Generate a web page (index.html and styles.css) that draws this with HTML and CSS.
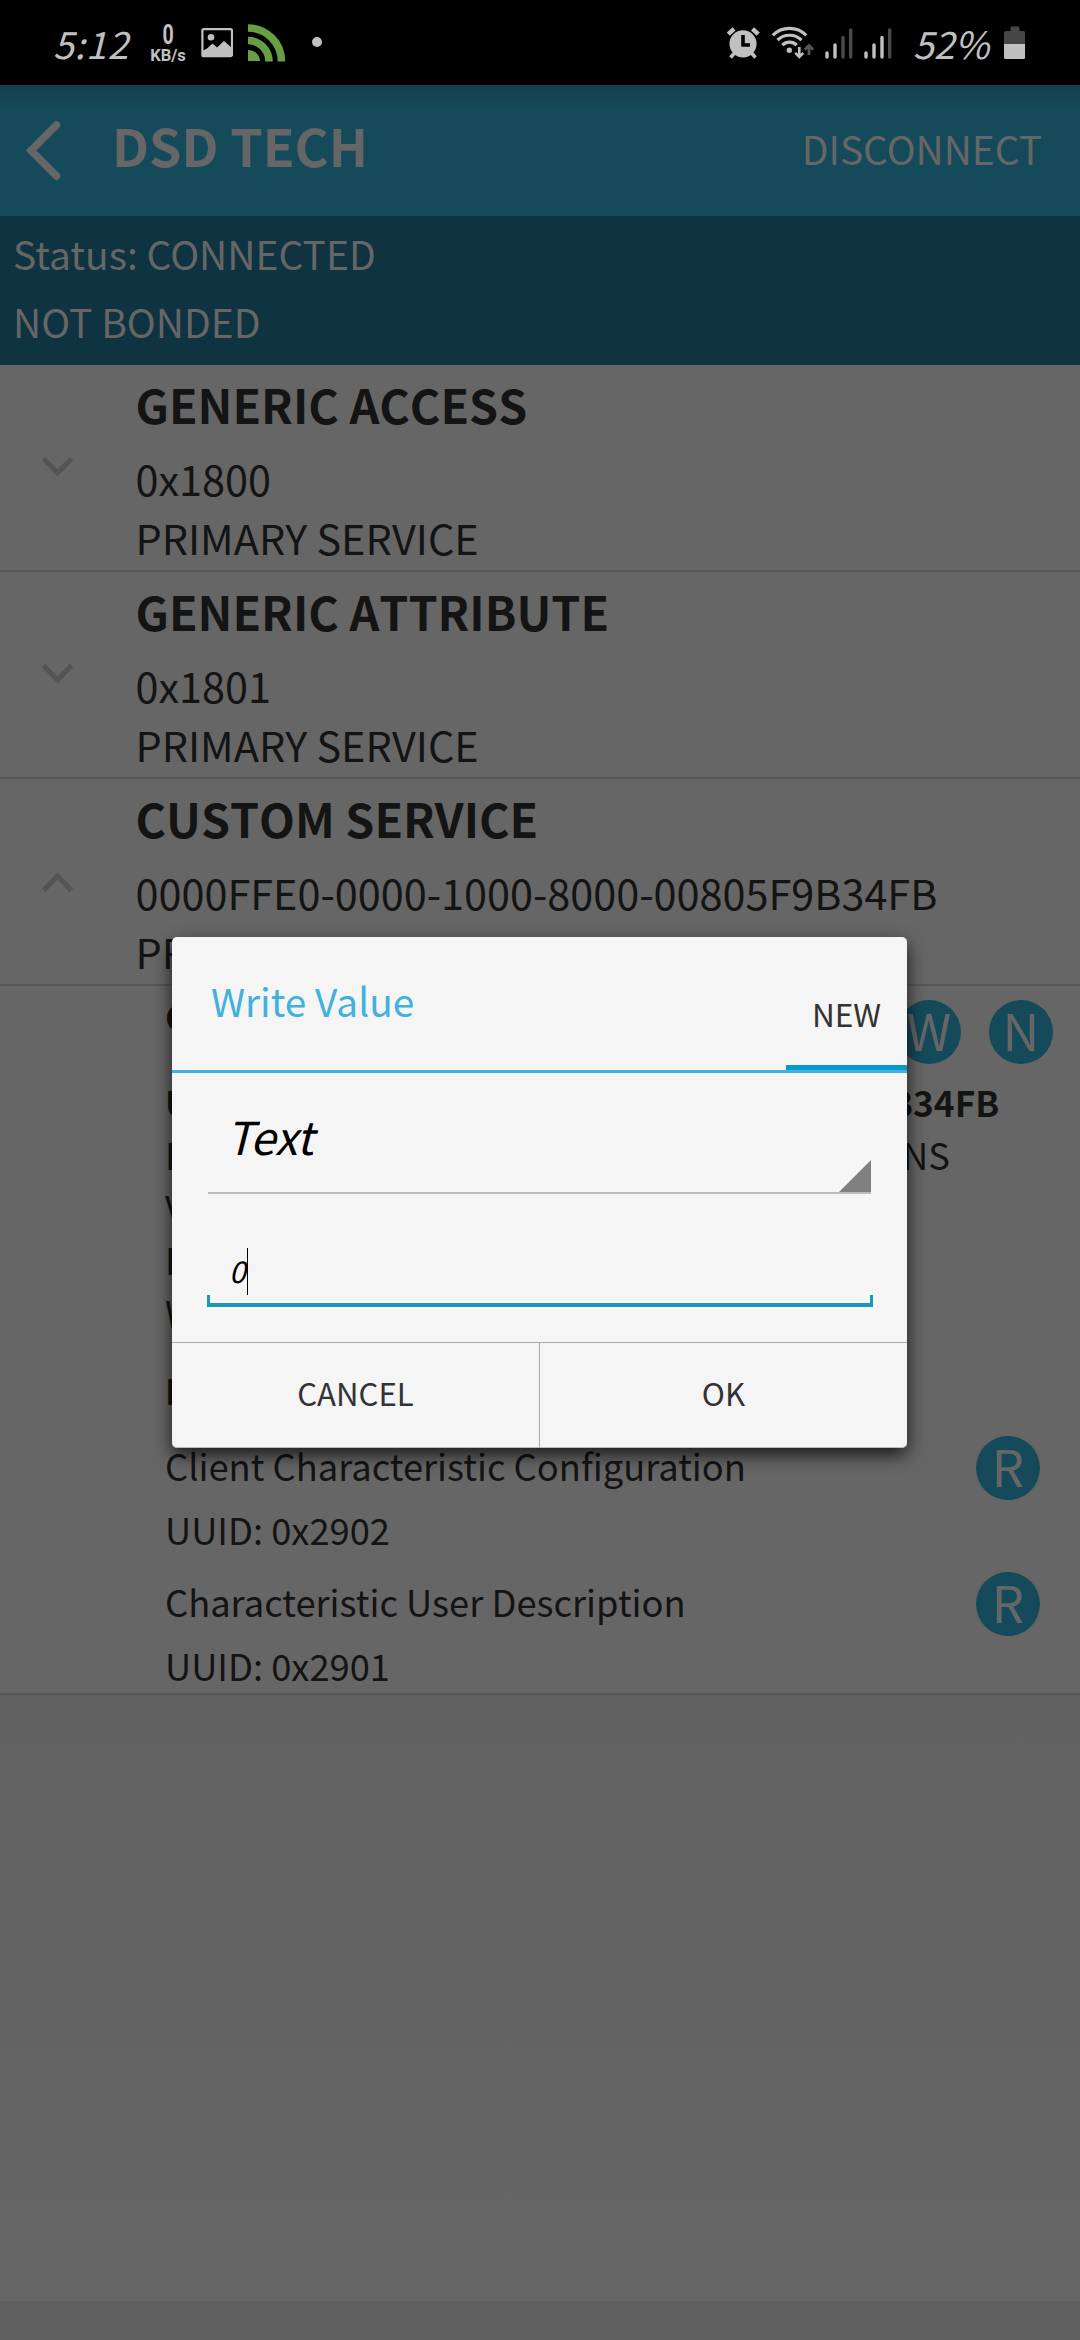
FILE: index.html
```html
<!DOCTYPE html>
<html lang="en">
<head>
<meta charset="utf-8">
<title>DSD TECH</title>
<link rel="stylesheet" href="styles.css">
</head>
<body>
<div class="screen">
  <header class="statusbar">
    <span class="clock">5:12</span>
    <span class="netspeed"><b class="rate">0</b><b class="unit">KB/s</b></span>
    <svg class="ic-image" width="32" height="30" viewBox="201 28 32 30">
      <rect x="202.4" y="29.2" width="29.6" height="27" rx="1.5" fill="none" stroke="#c0c0c0" stroke-width="2.2"/>
      <circle cx="211" cy="37.3" r="3.3" fill="#c0c0c0"/>
      <path d="M202 51l5-2.500 5.500-5 4.500 4 7-6.500 8 7v8h-30z" fill="#c0c0c0"/>
    </svg>
    <svg class="ic-cast" width="38" height="38" viewBox="0 0 38 38">
      <path d="M0 26a11.500 11.500 0 0 1 12 11H0z" fill="#689f45"/>
      <path d="M0 16.500A21 21 0 0 1 21 37.500M0 4A33.500 33.500 0 0 1 33.500 37.500" fill="none" stroke="#689f45" stroke-width="7.600"/>
    </svg>
    <i class="more-dot"></i>
    <span class="spacer"></span>
    <svg class="ic-alarm" width="34" height="34" viewBox="726 26 34 34">
      <circle cx="743" cy="43.800" r="13.600" fill="#c0c0c0"/>
      <path d="M728.300 34.200l5.700-5.400M752.500 28.800l5.700 5.400" stroke="#c0c0c0" stroke-width="4.500"/>
      <path d="M734.500 53l-4 4.500M751.500 53l4 4.500" stroke="#c0c0c0" stroke-width="3.400"/>
      <path d="M743 35v10h7" fill="none" stroke="#000" stroke-width="3.600"/>
    </svg>
    <svg class="ic-wifi" width="44" height="34" viewBox="771 26 44 34">
      <g fill="none" stroke="#c0c0c0" stroke-width="3.200">
        <path d="M772.800 35.300a23.500 23.500 0 0 1 33.400 0M777.500 40.200a17 17 0 0 1 24 0M782.300 45.200a10.200 10.200 0 0 1 14.400 0"/>
      </g>
      <circle cx="789.300" cy="50.200" r="2.700" fill="#c0c0c0"/>
      <path d="M799.300 47v9M795.300 52.800l4 4 4-4" fill="none" stroke="#c0c0c0" stroke-width="2.600"/>
      <path d="M809 55v-9M804.800 49.800l4.200-4.200 4.200 4.200" fill="none" stroke="#555" stroke-width="2.800"/>
    </svg>
    <svg class="ic-signal" width="28" height="32" viewBox="0 0 28 32">
      <g stroke-width="3.400" stroke-linecap="round"><path d="M2 26v4M10 18v12" stroke="#c0c0c0"/><path d="M18 10.500v19.500M25.700 3v27" stroke="#4a4a4a"/></g>
    </svg>
    <svg class="ic-signal2" width="28" height="32" viewBox="0 0 28 32">
      <g stroke-width="3.400" stroke-linecap="round"><path d="M2 26v4M10 18v12M18 10.500v19.500" stroke="#c0c0c0"/><path d="M25.700 3v27" stroke="#4a4a4a"/></g>
    </svg>
    <span class="percent">52%</span>
    <svg class="ic-battery" width="22" height="34" viewBox="0 0 22 34">
      <path d="M6.500 1.500q0-1 1-1h7q1 0 1 1V5h4q1.500 0 1.500 1.500V18H0V6.500Q0 5 1.500 5h5z" fill="#454545"/>
      <path d="M0 18h21v13.500q0 1.500-1.500 1.500h-18Q0 33 0 31.500z" fill="#c0c0c0"/>
    </svg>
  </header>

  <nav class="appbar">
    <svg class="back" width="37" height="62" viewBox="25 120 37 62">
      <path d="M56.500 125L31 150.500l25.500 25.500" fill="none" stroke="#666" stroke-width="7.500" stroke-linecap="round"/>
    </svg>
    <h1 class="device">DSD TECH</h1>
    <span class="disconnect">DISCONNECT</span>
  </nav>

  <section class="connection">
    <p>Status: CONNECTED</p>
    <p>NOT BONDED</p>
  </section>

  <main class="services">
    <article class="service">
      <svg class="chevron" width="33" height="21" viewBox="0 0 33 21"><path d="M2.500 2.500L16.500 17l14-14.500" fill="none" stroke="#545454" stroke-width="5"/></svg>
      <div class="service-text"><h2>GENERIC ACCESS</h2><p>0x1800</p><p>PRIMARY SERVICE</p></div>
    </article>
    <article class="service">
      <svg class="chevron" width="33" height="21" viewBox="0 0 33 21"><path d="M2.500 2.500L16.500 17l14-14.500" fill="none" stroke="#545454" stroke-width="5"/></svg>
      <div class="service-text"><h2>GENERIC ATTRIBUTE</h2><p>0x1801</p><p>PRIMARY SERVICE</p></div>
    </article>
    <article class="service">
      <svg class="chevron open" width="33" height="21" viewBox="0 0 33 21"><path d="M2.500 18.500L16.500 4l14 14.500" fill="none" stroke="#545454" stroke-width="5"/></svg>
      <div class="service-text"><h2>CUSTOM SERVICE</h2><p>0000FFE0-0000-1000-8000-00805F9B34FB</p><p>PRIMARY SERVICE</p></div>
    </article>

    <div class="characteristic">
      <div class="char-head">
        <h3>CUSTOM CHARACTERISTIC</h3>
        <div class="badges"><span class="badge">W</span><span class="badge">N</span></div>
      </div>
      <p class="line strong uuid">UUID: 0000FFE1-0000-1000-8000-00805F9B34FB</p>
      <p class="line props"><span>Properties:</span><span>NOTIFICATIONS</span></p>
      <p class="line">Value:</p>
      <p class="line">Properties:</p>
      <p class="line">Write Type:</p>
      <p class="line strong descriptors">Descriptors:</p>
      <div class="descriptor">
        <div><p class="d-name">Client Characteristic Configuration</p><p class="d-uuid">UUID: 0x2902</p></div>
        <span class="badge">R</span>
      </div>
      <div class="descriptor">
        <div><p class="d-name">Characteristic User Description</p><p class="d-uuid">UUID: 0x2901</p></div>
        <span class="badge">R</span>
      </div>
    </div>
  </main>
  <div class="blank"></div>
  <footer class="navbar"></footer>

  <div class="dialog">
    <div class="dialog-head">
      <h2 class="dialog-title">Write Value</h2>
      <span class="tab">NEW</span>
    </div>
    <div class="dialog-body">
      <div class="spinner">
        <span>Text</span>
        <svg width="32" height="32" viewBox="0 0 32 32"><path d="M32 0v32H0z" fill="#808080"/></svg>
      </div>
      <div class="edit"><span>0</span><i class="caret"></i></div>
    </div>
    <div class="buttons"><span class="btn">CANCEL</span><span class="btn">OK</span></div>
  </div>
</div>
</body>
</html>
```
FILE: styles.css
```css
* { margin: 0; padding: 0; box-sizing: border-box; }

body {
  width: 1080px;
  height: 2340px;
  overflow: hidden;
  background: #666;
  color: #141414;
  font-family: "Noto Sans CJK SC", "Noto Sans", sans-serif;
}

svg { display: block; flex: none; }

.screen {
  position: relative;
  display: flex;
  flex-direction: column;
  height: 2340px;
}

/* System status bar */
.statusbar {
  display: flex;
  align-items: flex-start;
  flex: none;
  height: 85px;
  padding: 0 54px 0 53px;
  background: #000;
  color: #c0c0c0;
}
.clock, .percent {
  font-size: 37.500px;
  font-style: italic;
  line-height: 85px;
  white-space: nowrap;
}
.clock { width: 93px; letter-spacing: .8px; }
.netspeed {
  display: flex;
  flex-direction: column;
  align-items: center;
  width: 44px;
  padding-top: 21px;
  font-family: Roboto, sans-serif;
}
.rate { font-size: 28px; line-height: 28px; transform: scaleX(.7); }
.unit { margin-top: -2px; font-size: 16.500px; line-height: 17px; }
.ic-image { margin: 28px 0 0 11px; }
.ic-cast { margin: 24px 0 0 15px; }
.more-dot {
  width: 10px;
  height: 10px;
  margin: 37px 0 0 26px;
  border-radius: 50%;
  background: #c0c0c0;
}
.spacer { flex: 1; }
.ic-alarm { margin-top: 26px; }
.ic-wifi { margin: 26px 0 0 11px; }
.ic-signal { margin: 27px 0 0 10px; }
.ic-signal2 { margin: 27px 0 0 11px; }
.percent { width: 89px; margin-left: 21px; }
.ic-battery { margin: 26px 0 0 2px; }

/* App bar */
.appbar {
  display: flex;
  align-items: flex-start;
  flex: none;
  height: 131px;
  padding: 0 38px 0 25px;
  background: linear-gradient(#133f4e 0, #154a5b 26px);
  color: #666;
}
.back { margin-top: 35px; }
.device {
  flex: 1;
  margin-left: 50px;
  font-size: 51.900px;
  font-weight: 700;
  line-height: 120px;
}
.disconnect { font-size: 38.900px; line-height: 126px; }

.connection {
  flex: none;
  height: 149px;
  padding: 3px 13px 0;
  background: #0f3341;
  color: #666;
  font-size: 39px;
  line-height: 68px;
}

/* Service list */
.service {
  display: flex;
  align-items: flex-start;
  height: 207px;
  border-bottom: 2px solid #565656;
}
.chevron { margin: 91px 61.500px 0 41px; }
.chevron.open { margin-top: 93px; }
.service-text { padding-top: 9px; white-space: nowrap; }
.service-text h2 {
  margin-bottom: 14.500px;
  font-size: 46.600px;
  font-kerning: none;
  line-height: 60px;
}
.service-text p { font-size: 41.400px; line-height: 59px; }

.characteristic {
  height: 709px;
  padding-left: 165px;
  border-bottom: 2px solid #565656;
  font-size: 36.300px;
  white-space: nowrap;
}
.char-head { display: flex; justify-content: space-between; height: 89.500px; padding-right: 27px; }
.char-head h3 { font-size: 35.300px; line-height: 60px; }
.badges { display: flex; gap: 28px; padding-top: 14px; }
.badge {
  flex: none;
  width: 64px;
  height: 64px;
  border-radius: 50%;
  background: #154a5b;
  color: #666;
  font-size: 51px;
  line-height: 58px;
  text-align: center;
}
.line { line-height: 52.600px; }
.strong { font-weight: 700; font-size: 35.300px; }
.props { display: flex; justify-content: space-between; padding-right: 130px; }
.descriptors { margin-top: 26px; }
.descriptor { display: flex; justify-content: space-between; align-items: flex-start; height: 136px; padding-right: 40px; }
.descriptors + .descriptor { margin-top: 15.500px; }
.descriptor .badge { margin-top: 3px; }
.d-name { line-height: 64px; }
.d-uuid { margin-top: 3px; line-height: 58px; }

.blank { flex: 1; background: linear-gradient(#616161, #666); }
.navbar { flex: none; height: 39px; background: #5f5f5f; }

/* Write dialog */
.dialog {
  position: absolute;
  left: 172px;
  top: 937px;
  width: 735px;
  height: 511px;
  border-radius: 5px;
  background: #f5f5f5;
  box-shadow: 0 7px 18px rgba(0, 0, 0, .75), inset 0 -1px 0 #bbb;
}
.dialog-head {
  display: flex;
  justify-content: space-between;
  height: 136px;
  padding-left: 39px;
  border-bottom: 3px solid #42b1dc;
}
.dialog-title { color: #42b1dc; font-size: 38.800px; font-weight: 400; line-height: 126px; }
.tab {
  width: 121px;
  padding-top: 24px;
  border-bottom: 5px solid #0698cb;
  color: #333;
  font-size: 31.600px;
  line-height: 104px;
  text-align: center;
}
.dialog-body { height: 269px; padding: 0 34px 0 35px; }
.spinner {
  display: flex;
  justify-content: space-between;
  align-items: flex-end;
  height: 121px;
  margin: 0 2px 0 1px;
  padding: 5px 0 0 18px;
  border-bottom: 2px solid #bbb;
  color: #000;
  font-size: 45.500px;
  font-style: italic;
  line-height: 114px;
}
.edit {
  position: relative;
  display: flex;
  height: 113px;
  padding: 53px 0 0 22px;
  border-bottom: 4px solid #1a96c0;
  color: #000;
  font-size: 30px;
  font-style: italic;
  line-height: 46px;
}
.edit::before, .edit::after {
  content: "";
  position: absolute;
  bottom: 0;
  width: 3px;
  height: 8px;
  background: #1a96c0;
}
.edit::before { left: 0; }
.edit::after { right: 0; }
.caret { width: 1px; height: 47px; margin: 1px 0 0 1px; background: #000; }
.buttons { display: flex; height: 106px; border-top: 1px solid #aaa; }
.btn {
  flex: 1;
  color: #333;
  font-size: 31.200px;
  line-height: 99px;
  text-align: center;
}
.btn + .btn { border-left: 1px solid #aaa; }
```
